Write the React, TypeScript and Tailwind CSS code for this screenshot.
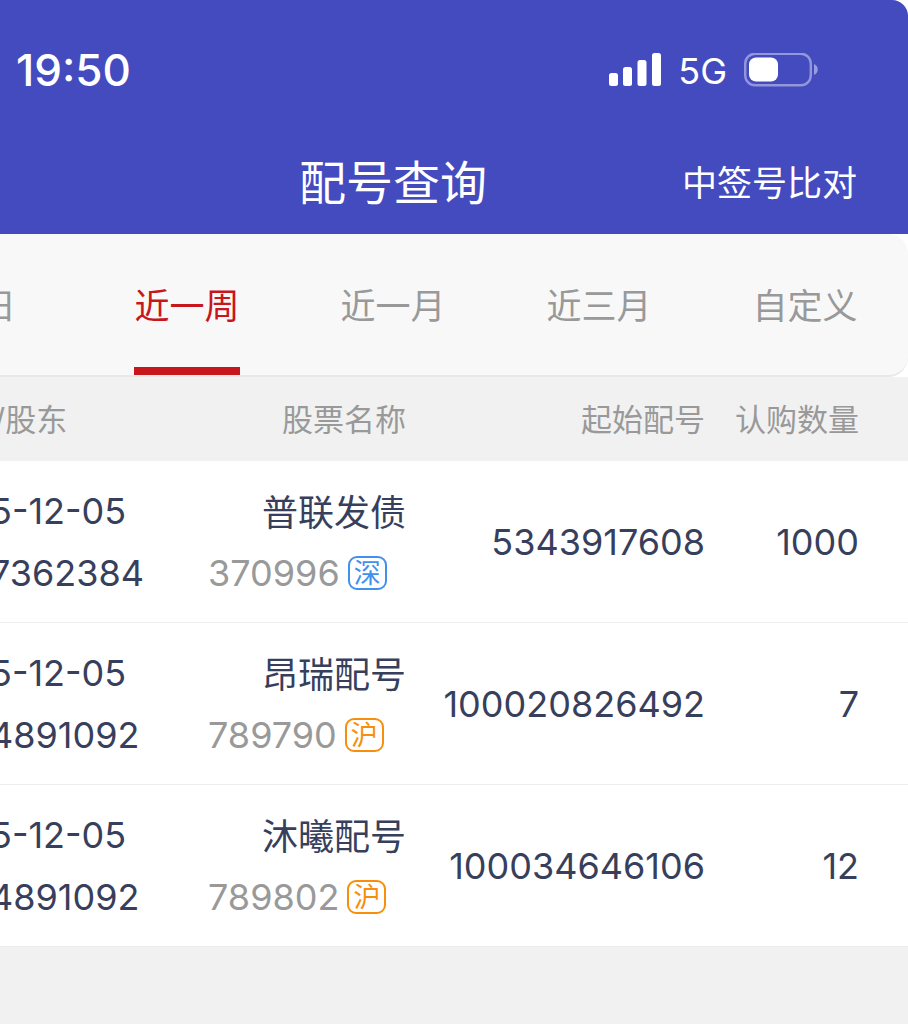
import { useState } from "react";

const tabs = ["今日", "近一周", "近一月", "近三月", "自定义"];

const rows = [
  {
    date: "5-12-05",
    account: "7362384",
    name: "普联发债",
    code: "370996",
    market: "深",
    start: "5343917608",
    amount: "1000",
  },
  {
    date: "5-12-05",
    account: "4891092",
    name: "昂瑞配号",
    code: "789790",
    market: "沪",
    start: "100020826492",
    amount: "7",
  },
  {
    date: "5-12-05",
    account: "4891092",
    name: "沐曦配号",
    code: "789802",
    market: "沪",
    start: "100034646106",
    amount: "12",
  },
];

function StatusBar() {
  return (
    <div className="flex h-[140px] items-center justify-between pl-[138px] pr-[90px]">
      <span className="text-[44px] font-medium">19:50</span>
      <div className="flex items-center">
        <svg width="54" height="34" viewBox="0 0 54 34" fill="currentColor">
          <rect x="1" y="20" width="9" height="13" rx="2.5" />
          <rect x="15" y="14" width="9" height="19" rx="2.5" />
          <rect x="29.5" y="7" width="9" height="26" rx="2.5" />
          <rect x="44" y="0" width="9" height="33" rx="2.5" />
        </svg>
        <span className="mx-4 pt-0.5 text-[36px]">5G</span>
        <svg width="75" height="34" viewBox="0 0 75 34" fill="none">
          <rect
            x="2.2"
            y="0.7"
            width="65.6"
            height="31.6"
            rx="10"
            stroke="#fff"
            strokeOpacity="0.42"
            strokeWidth="2.4"
          />
          <rect x="6" y="4.5" width="29" height="24" rx="7" fill="#fff" />
          <path d="M71 11c5 2 5 9 0 11z" fill="#fff" fillOpacity="0.45" />
        </svg>
      </div>
    </div>
  );
}

function Header() {
  return (
    <header className="rounded-tr-2xl bg-[#444bbf] pb-2 text-white">
      <StatusBar />
      <div className="grid h-[86px] grid-cols-[1fr_auto_1fr] items-center pr-[51px]">
        <h1 className="col-start-2 ml-[51px] text-[47px]">配号查询</h1>
        <a href="#compare" className="justify-self-end text-[35px]">
          中签号比对
        </a>
      </div>
    </header>
  );
}

function Tabs() {
  const [active, setActive] = useState("近一周");

  return (
    <nav className="grid h-[143px] grid-cols-5 rounded-r-[20px] border-b-2 border-[#e8e8e8] bg-[#f8f8f8]">
      {tabs.map((tab) => (
        <button
          key={tab}
          type="button"
          onClick={() => setActive(tab)}
          className={`justify-self-center border-b-8 pt-3 text-[35px] ${
            tab === active
              ? "border-[#c8161d] text-[#c8161d]"
              : "border-transparent text-[#999]"
          }`}
        >
          {tab}
        </button>
      ))}
    </nav>
  );
}

function MarketBadge({ market }: { market: string }) {
  return (
    <span
      className={`flex h-[34px] w-[39px] items-center justify-center rounded-[9px] border-2 pt-0.5 text-[27px] leading-none ${
        market === "深"
          ? "border-[#4191ec] text-[#4191ec]"
          : "border-[#f78f0c] text-[#f78f0c]"
      }`}
    >
      {market}
    </span>
  );
}

function AllotmentTable() {
  return (
    <table className="w-full table-fixed border-separate border-spacing-0 text-[36px] text-[#373f5c]">
      <thead>
        <tr className="h-[84px] bg-[#f1f1f1] text-[31px] text-[#999]">
          <th className="w-[330px] pl-[116px] pt-0.5 text-left font-normal">
            /股东
          </th>
          <th className="w-[198px] pt-0.5 text-right font-normal">股票名称</th>
          <th className="pt-0.5 text-right font-normal">起始配号</th>
          <th className="w-[203px] pr-[49px] pt-0.5 text-right font-normal">
            认购数量
          </th>
        </tr>
      </thead>
      <tbody className="bg-white">
        {rows.map((row) => (
          <tr
            key={row.name}
            className="h-[162px] leading-[62px] *:border-b *:border-[#ededed]"
          >
            <td className="pl-[112px]">
              <p>{row.date}</p>
              <p>{row.account}</p>
            </td>
            <td>
              <p className="pt-1 text-right leading-[58px]">{row.name}</p>
              <p className="flex items-center gap-2 text-[#999]">
                {row.code}
                <MarketBadge market={row.market} />
              </p>
            </td>
            <td className="text-right">{row.start}</td>
            <td className="pr-[49px] text-right">{row.amount}</td>
          </tr>
        ))}
      </tbody>
    </table>
  );
}

export default function App() {
  return (
    <div className="min-h-screen overflow-hidden bg-[#f1f1f1] font-['Inter','Noto_Sans_CJK_SC',sans-serif]">
      <div className="-ml-[122px]">
        <div className="bg-white">
          <Header />
          <Tabs />
        </div>
        <AllotmentTable />
      </div>
    </div>
  );
}
